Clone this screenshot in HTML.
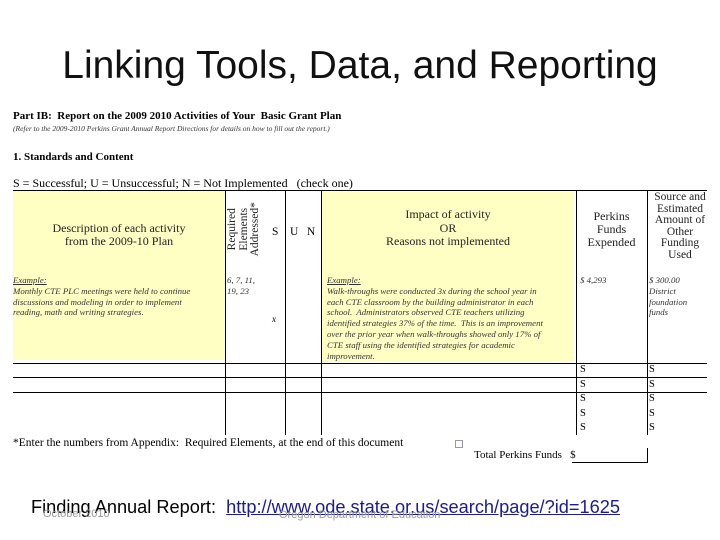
<!DOCTYPE html>
<html><head><meta charset="utf-8"><style>
body{margin:0;width:720px;height:540px;background:#fff;position:relative;overflow:hidden;font-family:"Liberation Serif",serif;color:#000}
.a{position:absolute;white-space:nowrap}
.y{position:absolute;background:#ffffc4}
.h{position:absolute;height:1px;background:#000}
.v{position:absolute;width:1px;background:#000}
.it{font-style:italic;font-size:8.8px;line-height:10.8px;color:#333}
.c{text-align:center;font-size:11px;line-height:12px;color:#222}
</style></head><body>
<div class="a" style="left:0;width:720px;text-align:center;top:44px;font-family:'Liberation Sans',sans-serif;font-size:39px;color:#111">Linking Tools, Data, and Reporting</div>

<div class="a" style="left:13px;top:110px;font-size:11px;font-weight:bold">Part IB:&nbsp; Report on the 2009 2010 Activities of Your&nbsp; Basic Grant Plan</div>
<div class="a it" style="left:13px;top:124px;font-size:7.5px">(Refer to the 2009-2010 Perkins Grant Annual Report Directions for details on how to fill out the report.)</div>
<div class="a" style="left:13px;top:151px;font-size:11px;font-weight:bold">1. Standards and Content</div>
<div class="a" style="left:13px;top:176px;font-size:12px">S = Successful; U = Unsuccessful; N = Not Implemented&nbsp;&nbsp; (check one)</div>

<div class="y" style="left:13px;top:191px;width:212px;height:169px"></div>
<div class="y" style="left:322px;top:192px;width:252px;height:170px"></div>

<div class="h" style="left:13px;top:190px;width:694px"></div>
<div class="h" style="left:13px;top:363px;width:694px"></div>
<div class="h" style="left:13px;top:377px;width:694px"></div>
<div class="h" style="left:13px;top:392px;width:694px"></div>
<div class="v" style="left:225px;top:190px;height:245px"></div>
<div class="v" style="left:285px;top:190px;height:245px"></div>
<div class="v" style="left:321px;top:190px;height:245px"></div>
<div class="v" style="left:576px;top:190px;height:245px"></div>
<div class="v" style="left:647px;top:190px;height:245px"></div>

<div class="a c" style="left:13px;width:212px;top:222px;font-size:12px;line-height:13px">Description of each activity<br>from the 2009-10 Plan</div>
<div class="a c" style="left:212px;top:212px;width:64px;transform:rotate(-90deg);transform-origin:center;font-size:11.5px;line-height:11.5px">Required<br>Elements<br>Addressed*</div>
<div class="a" style="left:272px;top:226px;font-size:11.5px">S</div>
<div class="a" style="left:290px;top:226px;font-size:11.5px">U&nbsp;&nbsp; N</div>
<div class="a c" style="left:322px;width:252px;top:208px;font-size:12px;line-height:13.5px">Impact of activity<br>OR<br>Reasons not implemented</div>
<div class="a c" style="left:576px;width:71px;top:210px;font-size:12px;line-height:13px">Perkins<br>Funds<br>Expended</div>
<div class="a c" style="left:647px;width:66px;top:192px;font-size:11.5px;line-height:11.5px">Source and<br>Estimated<br>Amount of<br>Other<br>Funding<br>Used</div>

<div class="a it" style="left:13px;top:275px"><u>Example:</u><br>Monthly CTE PLC meetings were held to continue<br>discussions and modeling in order to implement<br>reading, math and writing strategies.</div>
<div class="a it" style="left:227px;top:275px">6, 7, 11,<br>19, 23</div>
<div class="a" style="left:272px;top:314px;font-size:9px;font-style:italic">x</div>
<div class="a it" style="left:327px;top:275px"><u>Example:</u><br>Walk-throughs were conducted 3x during the school year in<br>each CTE classroom by the building administrator in each<br>school.&nbsp; Administrators observed CTE teachers utilizing<br>identified strategies 37% of the time.&nbsp; This is an improvement<br>over the prior year when walk-throughs showed only 17% of<br>CTE staff using the identified strategies for academic<br>improvement.</div>
<div class="a it" style="left:580px;top:275px">$ 4,293</div>
<div class="a it" style="left:649px;top:275px">$ 300.00<br>District<br>foundation<br>funds</div>

<div class="a" style="left:580px;top:363px;font-size:10.5px;line-height:14.5px">S<br>S<br>S<br>S<br>S</div>
<div class="a" style="left:649px;top:363px;font-size:10.5px;line-height:14.5px">S<br>S<br>S<br>S<br>S</div>

<div class="a" style="left:13px;top:437px;font-size:11.5px">*Enter the numbers from Appendix:&nbsp; Required Elements, at the end of this document</div>
<div class="a" style="left:455px;top:440px;width:6px;height:6px;border:1px solid #99a"></div>
<div class="a" style="left:474px;top:449px;font-size:11px">Total Perkins Funds&nbsp;&nbsp; $</div>
<div class="h" style="left:572px;top:462px;width:75px"></div>
<div class="v" style="left:647px;top:448px;height:15px"></div>

<div class="a" style="left:31px;top:497px;font-family:'Liberation Sans',sans-serif;font-size:18.2px">Finding Annual Report:&nbsp; <span style="color:#1a1a9a;text-decoration:underline">http://www.ode.state.or.us/search/page/?id=1625</span></div>
<div class="a" style="left:43px;top:508px;font-family:'Liberation Sans',sans-serif;font-size:11px;color:#999">October 2010</div>
<div class="a" style="left:279px;top:509px;font-family:'Liberation Sans',sans-serif;font-size:11px;color:#999">Oregon Department of Education</div>
</body></html>
